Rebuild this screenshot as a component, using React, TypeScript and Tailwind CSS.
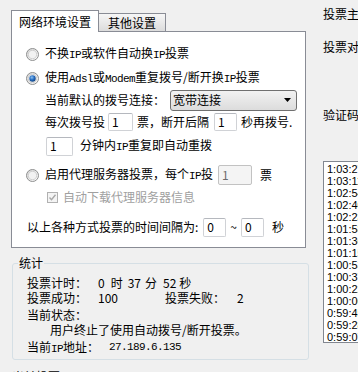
import type { ReactNode } from 'react';

// 拉丁字符：模拟宋体半角宽度 (6px)
function L({ children }: { children: ReactNode }) {
  return <span className="font-['Liberation_Mono',monospace] text-[11px] tracking-[-0.6px]">{children}</span>;
}

function Radio({ checked }: { checked?: boolean }) {
  return (
    <svg width="13" height="13" viewBox="0 0 13 13" className="shrink-0">
      <defs>
        <linearGradient id="rg-off" x1="0" y1="0" x2="1" y2="1">
          <stop offset="0" stopColor="#d4d4d4" />
          <stop offset="1" stopColor="#ffffff" />
        </linearGradient>
        <radialGradient id="rg-dot" cx="0.4" cy="0.35" r="0.7">
          <stop offset="0" stopColor="#8fc4f0" />
          <stop offset="0.5" stopColor="#2a70c4" />
          <stop offset="1" stopColor="#0f3f7a" />
        </radialGradient>
      </defs>
      <circle cx="6.5" cy="6.5" r="6" fill="url(#rg-off)" stroke="#8e8f8f" />
      <circle cx="6.5" cy="6.5" r="4.2" fill="#f2f2f2" stroke="#c8c8c8" strokeWidth="0.8" />
      {checked && <circle cx="6.5" cy="6.5" r="3.2" fill="url(#rg-dot)" />}
    </svg>
  );
}

function Field({ value, className, disabled }: { value: string; className: string; disabled?: boolean }) {
  return (
    <div
      className={
        'flex items-center shrink-0 pl-[3px] border rounded-[2px] leading-none text-[12px] ' +
        (disabled ? 'bg-[#f4f4f4] border-[#c2c2c2] text-[#6d6d6d] ' : 'bg-white border-[#d0d2d6] border-t-[#b5b8be] text-black ') +
        className
      }
    >
      {value}
    </div>
  );
}

const times = [
  '1:03:27', '1:03:11', '1:02:54', '1:02:40', '1:02:23', '1:01:58', '1:01:36', '1:01:15',
  '1:00:53', '1:00:37', '1:00:22', '1:00:06', '0:59:45', '0:59:28', '0:59:07',
];

export default function App() {
  return (
    <div className="w-[358px] h-[372px] overflow-hidden bg-[#f0f0f0] flex text-[12px] text-black font-['Noto_Sans_CJK_SC',sans-serif]">
      {/* 左侧：设置 + 统计 */}
      <div className="w-[312px] shrink-0 flex flex-col pt-[10px] pl-[11px]">
        {/* 选项卡 */}
        <div className="flex shrink-0 items-end h-[22px] -mb-px relative z-10">
          <div className="h-[22px] w-[88px] border border-b-0 border-[#898c95] bg-white flex items-center justify-center leading-none">
            网络环境设置
          </div>
          <div className="h-[18px] w-[67px] mb-px border border-l-0 border-b-0 border-[#898c95] bg-gradient-to-b from-[#f6f6f6] to-[#dcdcdc] flex items-center justify-center leading-none">
            其他设置
          </div>
        </div>

        <div className="w-[295px] h-[217px] shrink-0 border border-[#898c95] bg-white flex flex-col pt-[12px] leading-none whitespace-nowrap">
          <div className="flex items-center shrink-0 h-[20px] pl-[14px]">
            <Radio />
            <span className="ml-[6px]">不换<L>IP</L>或软件自动换<L>IP</L>投票</span>
          </div>
          <div className="flex items-center shrink-0 h-[22px] mt-[3px] pl-[14px]">
            <Radio checked />
            <span className="ml-[6px]">使用<L>Adsl</L>或<L>Modem</L>重复拨号/断开换<L>IP</L>投票</span>
          </div>
          <div className="flex items-center shrink-0 h-[22px] pl-[33px]">
            <span>当前默认的拨号连接：</span>
            <div className="ml-[5px] w-[127px] h-[21px] border border-[#707070] rounded-[3px] bg-gradient-to-b from-[#f2f2f2] to-[#dcdcdc] flex items-center pl-[2px] pr-[5px]">
              <span className="flex-1">宽带连接</span>
              <svg width="7" height="4" viewBox="0 0 7 4">
                <path d="M0 0h7L3.5 4z" fill="#000" />
              </svg>
            </div>
          </div>
          <div className="flex items-center shrink-0 h-[20px] mt-px pl-[33px]">
            <span>每次拨号投</span>
            <Field value="1" className="ml-[3px] w-[25px] h-[18px]" />
            <span className="ml-[4px]">票，断开后隔</span>
            <Field value="1" className="ml-[5px] w-[23px] h-[18px]" />
            <span className="ml-[4px]">秒再拨号.</span>
          </div>
          <div className="flex items-center shrink-0 h-[20px] mt-[4px] pl-[34px]">
            <Field value="1" className="w-[27px] h-[19px]" />
            <span className="ml-[7px]">分钟内<L>IP</L>重复即自动重拨</span>
          </div>
          <div className="flex items-center shrink-0 h-[22px] mt-[8px] pl-[14px]">
            <Radio />
            <span className="ml-[6px]">启用代理服务器投票，每个<L>IP</L>投</span>
            <Field value="1" disabled className="ml-[5px] w-[34px] h-[20px]" />
            <span className="ml-[8px]">票</span>
          </div>
          <div className="flex items-center shrink-0 h-[18px] mt-[2px] pl-[35px]">
            <svg width="11" height="11" viewBox="0 0 11 11" className="shrink-0">
              <rect x="0.5" y="0.5" width="10" height="10" fill="#f4f4f4" stroke="#b1b1b1" />
              <path d="M2.5 5.5l2 2.2 4-5" fill="none" stroke="#a8a8a8" strokeWidth="1.4" />
            </svg>
            <span className="ml-[5px] text-[#a0a0a0]">自动下载代理服务器信息</span>
          </div>
          <div className="flex items-center shrink-0 h-[20px] mt-[11px] pl-[15px]">
            <span>以上各种方式投票的时间间隔为:</span>
            <Field value="0" className="ml-[5px] w-[23px] h-[19px]" />
            <span className="ml-[4px]">~</span>
            <Field value="0" className="ml-[4px] w-[23px] h-[19px]" />
            <span className="ml-[8px]">秒</span>
          </div>
        </div>

        {/* 统计 */}
        <div className="relative shrink-0 mt-[15px] ml-px w-[297px] h-[97px] border border-[#d5dfe5] rounded-[3px] flex flex-col pl-[14px] pt-[11px] leading-none whitespace-nowrap">
          <span className="absolute left-[5px] -top-[8px] bg-[#f0f0f0] px-px leading-[14px]">统计</span>
          <div className="flex items-center shrink-0 h-[15px]">
            <span className="w-[71px] shrink-0">投票计时：</span>
            <span>0</span>
            <span className="ml-[6px]">时</span>
            <span className="ml-[5px]">37</span>
            <span className="ml-[4px]">分</span>
            <span className="ml-[6px]">52</span>
            <span className="ml-[3px]">秒</span>
          </div>
          <div className="flex items-center shrink-0 h-[15px]">
            <span className="w-[71px] shrink-0">投票成功：</span>
            <span className="w-[67px] shrink-0">100</span>
            <span className="w-[72px] shrink-0">投票失败：</span>
            <span>2</span>
          </div>
          <div className="flex items-center shrink-0 h-[15px] mt-[2px]">当前状态：</div>
          <div className="flex items-center shrink-0 h-[15px] pl-[23px]">用户终止了使用自动拨号/断开投票。</div>
          <div className="flex items-center shrink-0 h-[15px] mt-[3px]">
            <span className="w-[82px] shrink-0">当前<L>IP</L>地址：</span>
            <L>27.189.6.135</L>
          </div>
        </div>
        <div className="shrink-0 mt-[10px] pl-px leading-[14px] whitespace-nowrap">当前投票</div>
      </div>

      {/* 右侧 */}
      <div className="flex-1 min-w-0 flex flex-col pl-[11px] pt-[6px] whitespace-nowrap leading-[16px]">
        <div className="h-[16px] shrink-0">投票主题：</div>
        <div className="h-[16px] shrink-0 mt-[17px]">投票对象：</div>
        <div className="h-[16px] shrink-0 mt-[52px]">验证码：</div>
        <div className="mt-[38px] shrink-0 h-[182px] w-[80px] border border-[#828790] bg-white pt-px pl-[3px] font-['Liberation_Sans',sans-serif] text-[11px] leading-[12px]">
          {times.map((t) => (
            <div key={t}>{t}</div>
          ))}
        </div>
      </div>
    </div>
  );
}
